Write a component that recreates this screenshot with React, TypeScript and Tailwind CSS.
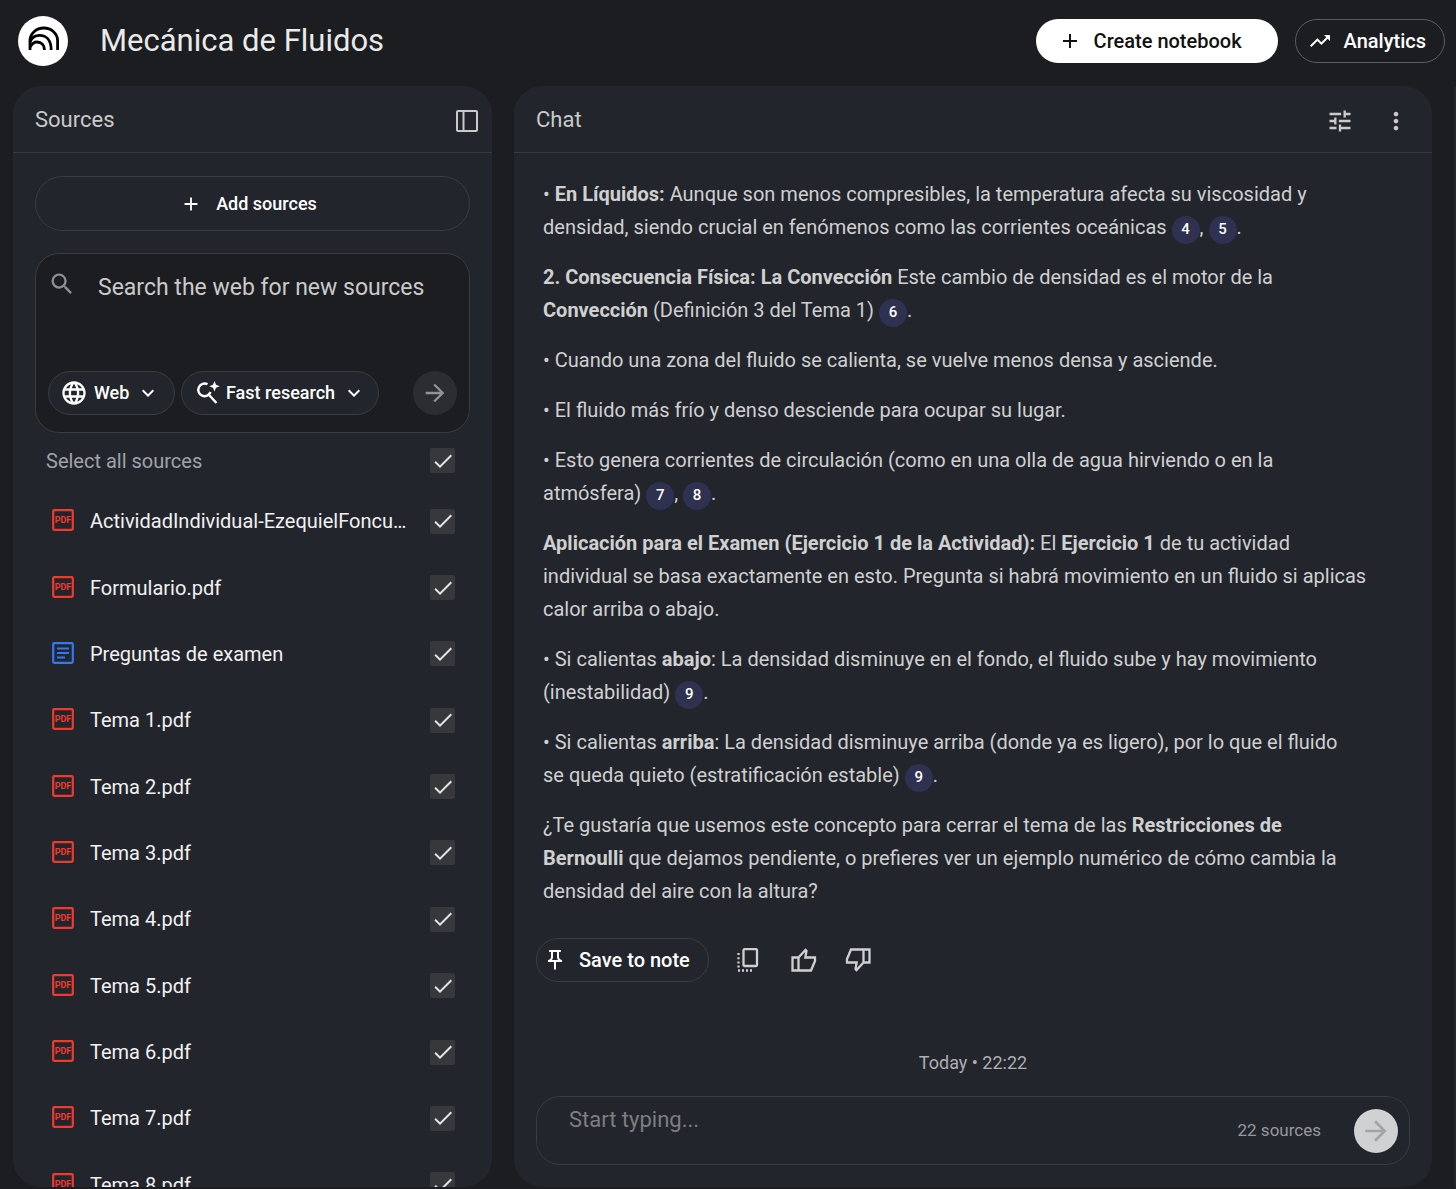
import React, { useState } from 'react';
import { MdArrowForward, MdCheck, MdKeyboardArrowDown, MdLanguage, MdMoreVert, MdOutlinePushPin, MdSearch, MdTrendingUp, MdTune, MdAdd } from 'react-icons/md';

type Source = { name: string; kind: 'pdf' | 'doc' };

const sources: Source[] = [
  { name: 'ActividadIndividual-EzequielFoncubierta.pdf', kind: 'pdf' },
  { name: 'Formulario.pdf', kind: 'pdf' },
  { name: 'Preguntas de examen', kind: 'doc' },
  { name: 'Tema 1.pdf', kind: 'pdf' },
  { name: 'Tema 2.pdf', kind: 'pdf' },
  { name: 'Tema 3.pdf', kind: 'pdf' },
  { name: 'Tema 4.pdf', kind: 'pdf' },
  { name: 'Tema 5.pdf', kind: 'pdf' },
  { name: 'Tema 6.pdf', kind: 'pdf' },
  { name: 'Tema 7.pdf', kind: 'pdf' },
  { name: 'Tema 8.pdf', kind: 'pdf' },
];

const Logo = () => (
  <svg viewBox="0 0 50 50" className="size-[50px] shrink-0" aria-hidden="true">
    <circle cx="25" cy="25" r="25" fill="#fff" />
    <g fill="none" stroke="#000" strokeWidth="2.8">
      <path d="M12 34V24.500a13.800 12.500 0 0 1 27.600 0V34" />
      <path d="M12 26C14 21 18 19.400 21.500 19.400C28.500 19.400 33.200 24.500 33.200 34" />
      <path d="M12 31C14 27.500 16 26 19 26C23.500 26 26.500 29 26.500 34" />
    </g>
  </svg>
);

const PanelIcon = () => (
  <svg viewBox="0 0 22 22" className="size-[22px]" fill="none" stroke="currentColor" strokeWidth="2">
    <rect x="1" y="1" width="20" height="20" rx="1" />
    <path d="M7.500 1v20" />
  </svg>
);

const SparkSearchIcon = () => (
  <svg viewBox="0 0 24 24" className="size-6 shrink-0" fill="none" stroke="currentColor" strokeWidth="2.400">
    <path d="M11.500 3.300A6.300 6.300 0 1 0 14.500 11M12.800 13.800l7.700 8.200" />
    <path d="M18.500 0l1.500 3.700 3.700 1.500-3.700 1.500-1.500 3.700-1.500-3.700-3.700-1.500 3.700-1.500z" fill="currentColor" stroke="none" />
  </svg>
);

const CopyIcon = () => (
  <svg viewBox="0 0 22 24" className="h-6 w-[22px]" fill="none" stroke="currentColor" strokeWidth="2.300">
    <rect x="6.500" y="1.200" width="13.500" height="16.800" rx="1" />
    <path d="M1.500 5v15.500" strokeDasharray="2 2.200" />
    <path d="M1 22.500h14" strokeDasharray="2 2" />
  </svg>
);

const ThumbIcon = ({ down }: { down?: boolean }) => (
  <svg viewBox="0 0 26 24" className={down ? 'h-6 w-[26px] rotate-180' : 'h-6 w-[26px]'} fill="none" stroke="currentColor" strokeWidth="2.300">
    <path d="M1.500 9.500h6v13h-6zM7.500 9.500l7-7.500 1 1-1.200 6.500H24v3.500l-4 9.500H7.500" />
  </svg>
);

const PdfIcon = () => (
  <svg viewBox="0 0 22 22" className="mb-0.5 size-[22px] shrink-0 text-[#f03a2e]" aria-hidden="true">
    <rect x="1.200" y="1.200" width="19.600" height="19.600" rx="1" fill="none" stroke="currentColor" strokeWidth="2.200" />
    <text x="11" y="14" textAnchor="middle" fontSize="9" fontWeight="700" fontFamily="Roboto, sans-serif" fill="currentColor">PDF</text>
  </svg>
);

const DocIcon = () => (
  <svg viewBox="0 0 22 22" className="mb-0.5 size-[22px] shrink-0 text-[#3079f0]" fill="none" stroke="currentColor" strokeWidth="2.200">
    <rect x="1.200" y="1.200" width="19.600" height="19.600" rx="1" />
    <path d="M5 6.500h12M5 11h12M5 15.500h8" />
  </svg>
);

const Checkbox = ({ id, checked, onChange }: { id: string; checked: boolean; onChange: () => void }) => (
  <span className="grid size-[25px] shrink-0 place-items-center">
    <input
      id={id}
      type="checkbox"
      checked={checked}
      onChange={onChange}
      className="col-start-1 row-start-1 size-[25px] appearance-none rounded-xs bg-[#37383b]"
    />
    {checked && <MdCheck className="pointer-events-none col-start-1 row-start-1 size-6 text-[#e3e3e3]" />}
  </span>
);

const Cite = ({ n }: { n: number }) => (
  <button type="button" className="inline-flex size-7 items-center justify-center rounded-full bg-[#2e3150] text-[15px] font-medium leading-none text-white">
    {n}
  </button>
);

const SourcesPanel = () => {
  const [checked, setChecked] = useState<boolean[]>(sources.map(() => true));

  const toggle = (i: number) => setChecked(checked.map((c, j) => (i === j ? !c : c)));
  const all = checked.every(Boolean);

  return (
    <section className="flex w-[479px] shrink-0 flex-col overflow-hidden rounded-[28px] bg-[#22252c]">
      <div className="flex h-[67px] shrink-0 items-center justify-between border-b border-[#37393b] pl-[22px] pr-3.5 text-[#c9cac9]">
        <h2 className="text-[22px]">Sources</h2>
        <button type="button" aria-label="Collapse sources" className="mt-1"><PanelIcon /></button>
      </div>

      <div className="flex flex-col px-[22px] pt-[23px]">
        <button type="button" className="flex h-[55px] items-center justify-center gap-3.5 rounded-full border border-[#3a3c3d] pr-2 text-lg font-medium text-white">
          <MdAdd className="size-[22px]" />
          Add sources
        </button>

        <div className="mt-[22px] flex h-[180px] flex-col justify-between rounded-[24px] border border-[#3a3c3d] bg-[#1c1d21] px-3 pb-[17px] pt-4">
          <div className="flex items-start gap-[22px]">
            <label htmlFor="web-search"><MdSearch className="size-7 text-[#8f9090]" /></label>
            <textarea
              id="web-search"
              rows={2}
              placeholder="Search the web for new sources"
              className="min-w-0 flex-1 resize-none bg-transparent text-[23px] leading-9 text-white outline-none placeholder:text-[#c9cac9]"
            />
          </div>
          <div className="flex items-center">
            <label className="flex h-11 items-center gap-1.5 rounded-full border border-[#3a3c3d] bg-[#22252c] pl-[11px] pr-3.5 text-lg font-medium text-white">
              <MdLanguage className="size-7" />
              <select className="appearance-none bg-transparent outline-none" aria-label="Search scope">
                <option>Web</option>
              </select>
              <MdKeyboardArrowDown className="size-6" />
            </label>
            <label className="ml-1.5 flex h-11 items-center gap-1.5 rounded-full border border-[#3a3c3d] bg-[#22252c] pl-3.5 pr-3 text-lg font-medium text-white">
              <SparkSearchIcon />
              <select className="appearance-none bg-transparent outline-none" aria-label="Research mode">
                <option>Fast research</option>
              </select>
              <MdKeyboardArrowDown className="size-6" />
            </label>
            <button type="button" aria-label="Search" className="ml-auto flex size-11 items-center justify-center rounded-full bg-[#2c2d30] text-[#929393]">
              <MdArrowForward className="size-7" />
            </button>
          </div>
        </div>

        <div className="mt-[15px] flex h-[25px] items-center justify-between pl-[11px] pr-[15px]">
          <label htmlFor="select-all" className="text-xl text-[#9fa3aa]">Select all sources</label>
          <Checkbox id="select-all" checked={all} onChange={() => setChecked(checked.map(() => !all))} />
        </div>

        <ul className="mt-[15px] grid h-[730px] shrink-0 auto-rows-fr grid-cols-1 pl-[17px] pr-[15px]">
          {sources.map((source, i) => (
            <li key={source.name} className="flex items-center">
              {source.kind === 'pdf' ? <PdfIcon /> : <DocIcon />}
              <label htmlFor={`source-${i}`} className="ml-4 mr-5 min-w-0 flex-1 truncate text-xl text-[#f1f1f1]">
                {source.name}
              </label>
              <Checkbox id={`source-${i}`} checked={checked[i]} onChange={() => toggle(i)} />
            </li>
          ))}
        </ul>
      </div>
    </section>
  );
};

const ChatPanel = () => {
  const [message, setMessage] = useState('');

  return (
    <section className="flex min-w-0 flex-1 flex-col overflow-hidden rounded-[28px] bg-[#22252c]">
      <div className="flex h-[67px] shrink-0 items-center justify-between border-b border-[#37393b] pl-[22px] pr-[22px] text-[#c9cac9]">
        <h2 className="text-[22px]">Chat</h2>
        <div className="mt-1 flex items-center gap-7">
          <button type="button" aria-label="Configure chat"><MdTune className="size-7" /></button>
          <button type="button" aria-label="More options"><MdMoreVert className="size-7" /></button>
        </div>
      </div>

      <div className="min-h-0 flex-1 px-[22px] pt-[25px] text-[#cfd0cf]">
        <div className="flex flex-col gap-[17px] pl-[7px] text-xl leading-[33px]">
          <p>• <strong>En Líquidos:</strong> Aunque son menos compresibles, la temperatura afecta su viscosidad y<br />densidad, siendo crucial en fenómenos como las corrientes oceánicas <Cite n={4} />, <Cite n={5} />.</p>
          <p><strong>2. Consecuencia Física: La Convección</strong> Este cambio de densidad es el motor de la<br /><strong>Convección</strong> (Definición 3 del Tema 1) <Cite n={6} />.</p>
          <p>• Cuando una zona del fluido se calienta, se vuelve menos densa y asciende.</p>
          <p>• El fluido más frío y denso desciende para ocupar su lugar.</p>
          <p>• Esto genera corrientes de circulación (como en una olla de agua hirviendo o en la<br />atmósfera) <Cite n={7} />, <Cite n={8} />.</p>
          <p><strong>Aplicación para el Examen (Ejercicio 1 de la Actividad):</strong> El <strong>Ejercicio 1</strong> de tu actividad<br />individual se basa exactamente en esto. Pregunta si habrá movimiento en un fluido si aplicas<br />calor arriba o abajo.</p>
          <p>• Si calientas <strong>abajo</strong>: La densidad disminuye en el fondo, el fluido sube y hay movimiento<br />(inestabilidad) <Cite n={9} />.</p>
          <p>• Si calientas <strong>arriba</strong>: La densidad disminuye arriba (donde ya es ligero), por lo que el fluido<br />se queda quieto (estratificación estable) <Cite n={9} />.</p>
          <p>¿Te gustaría que usemos este concepto para cerrar el tema de las <strong>Restricciones de<br />Bernoulli</strong> que dejamos pendiente, o prefieres ver un ejemplo numérico de cómo cambia la<br />densidad del aire con la altura?</p>
        </div>

        <div className="mt-[30px] flex items-center">
          <button type="button" className="flex h-11 items-center gap-3 rounded-full border border-[#3a3c3d] pl-1.5 pr-[18px] text-xl font-medium text-white">
            <MdOutlinePushPin className="size-6" />
            Save to note
          </button>
          <button type="button" aria-label="Copy" className="ml-7"><CopyIcon /></button>
          <button type="button" aria-label="Good response" className="ml-8"><ThumbIcon /></button>
          <button type="button" aria-label="Bad response" className="ml-7"><ThumbIcon down /></button>
        </div>
      </div>

      <p className="text-center text-lg text-[#adafb1]">Today • 22:22</p>
      <form className="mx-[22px] mb-[22px] mt-[19px] flex h-[69px] shrink-0 items-center rounded-[24px] border border-[#3a3c3d] pl-8 pr-[11px]">
        <input
          type="text"
          aria-label="Message"
          placeholder="Start typing..."
          value={message}
          onChange={(e) => setMessage(e.target.value)}
          className="mb-[22px] min-w-0 flex-1 bg-transparent text-[22px] text-white outline-none placeholder:text-[#7c7e80]"
        />
        <span className="text-[17px] text-[#96999c]">22 sources</span>
        <button type="button" aria-label="Send" className="ml-[33px] flex size-11 items-center justify-center rounded-full bg-[#d0d1d2] text-[#a3a4a5]">
          <MdArrowForward className="size-8" />
        </button>
      </form>
    </section>
  );
};

const App: React.FC = () => {
  return (
    <div className="flex h-screen flex-col overflow-hidden bg-[#1c1d21] font-['Roboto',sans-serif]">
      <header className="flex h-[86px] shrink-0 items-center gap-8 pb-1 pl-[18px] pr-[11px]">
        <Logo />
        <h1 className="text-[31px] text-[#e9eaea]">Mecánica de Fluidos</h1>
        <div className="ml-auto flex items-center gap-[17px]">
          <button type="button" className="flex h-11 items-center gap-3 rounded-full bg-white pl-[22px] pr-9 text-xl font-medium text-[#111]">
            <MdAdd className="size-6" />
            Create notebook
          </button>
          <button type="button" className="flex h-11 items-center gap-3 rounded-full border border-[#5b5c60] pl-3 pr-[18px] text-xl font-medium text-white">
            <MdTrendingUp className="size-6" />
            Analytics
          </button>
        </div>
      </header>
      <main className="flex min-h-0 flex-1 gap-[22px] pb-0.5 pl-[13px]">
        <SourcesPanel />
        <ChatPanel />
        <aside className="w-0.5 shrink-0 bg-[#22252c]" />
      </main>
    </div>
  );
};

export default App;
